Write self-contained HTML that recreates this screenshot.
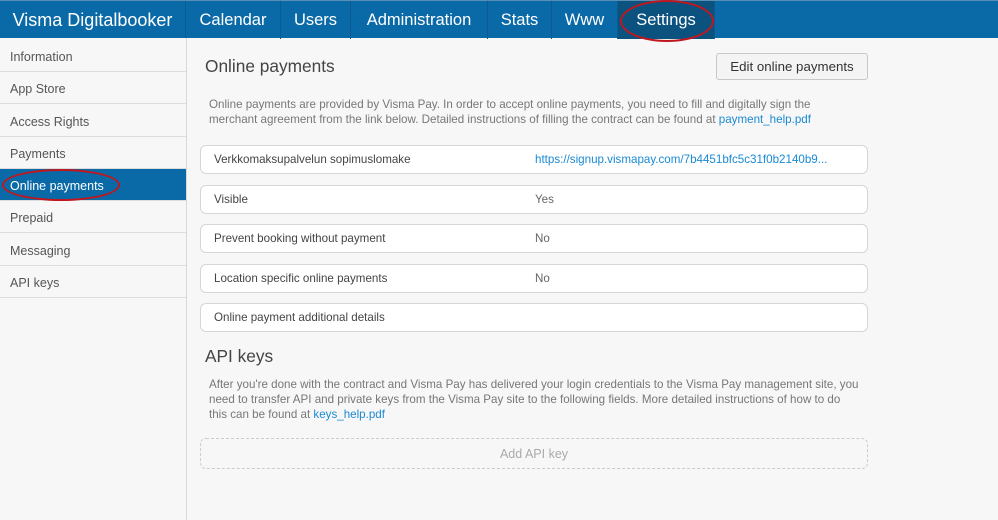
<!DOCTYPE html>
<html><head><meta charset="utf-8"><style>
*{box-sizing:border-box;margin:0;padding:0}
body{width:998px;height:520px;overflow:hidden;background:#f7f7f7;font-family:"Liberation Sans",sans-serif;position:relative}
.top{position:absolute;left:0;top:0;width:998px;height:38px;background:#0a6aa8;border-top:1px solid #5a8fb5}
.top div{position:absolute;top:0;height:38px;line-height:38px;color:#fff;font-size:16.5px;text-align:center;border-right:1px solid #0c5b8f}
.side{position:absolute;left:0;top:38px;width:187px;height:482px;background:#f7f7f7;border-right:1px solid #d8d8d8}
.side div{position:absolute;left:0;width:186px;height:32px;border-bottom:1px solid #dcdcdc;font-size:12.5px;color:#555;padding-left:10px;line-height:34px}
.side .act{background:#0a6aa8;color:#fff}
.h{position:absolute;font-size:17.3px;color:#444}
.p{position:absolute;left:209px;width:680px;font-size:11.6px;color:#777;line-height:15px;white-space:nowrap}
a{color:#1a8ad4;text-decoration:none}
.row{position:absolute;left:200px;width:668px;height:29px;background:#fff;border:1px solid #d6d6d6;border-radius:6px;font-size:11.6px;color:#444;line-height:28px;padding-left:13px}
.row span{position:absolute;left:334px;color:#666}
.btn{position:absolute;left:716px;top:53px;width:152px;height:27px;background:#f4f4f4;border:1px solid #c8c8c8;border-radius:3px;font-size:13.3px;color:#333;text-align:center;line-height:25px}
.add{position:absolute;left:200px;top:438px;width:668px;height:31px;border:1px dashed #ccc;border-radius:6px;font-size:12.5px;color:#aaa;text-align:center;line-height:30px}
.ov{position:absolute;border:2px solid #c0171e;border-radius:50%}
</style></head><body>
<div class="top">
<div style="left:0;width:186px;font-size:18px">Visma Digitalbooker</div>
<div style="left:186px;width:95px">Calendar</div>
<div style="left:281px;width:70px">Users</div>
<div style="left:351px;width:137px">Administration</div>
<div style="left:488px;width:64px">Stats</div>
<div style="left:552px;width:66px">Www</div>
<div style="left:618px;width:97px;background:#0b527f">Settings</div>
</div>
<div class="ov" style="left:620px;top:0;width:94px;height:42px"></div>
<div class="side">
<div style="top:2px">Information</div>
<div style="top:34px">App Store</div>
<div style="top:67px">Access Rights</div>
<div style="top:99px">Payments</div>
<div class="act" style="top:131px">Online payments</div>
<div style="top:163px">Prepaid</div>
<div style="top:196px">Messaging</div>
<div style="top:228px">API keys</div>
</div>
<div class="ov" style="left:2px;top:169px;width:118px;height:32px"></div>
<div class="h" style="left:205px;top:56px">Online payments</div>
<div class="btn">Edit online payments</div>
<div class="p" style="top:97px">Online payments are provided by Visma Pay. In order to accept online payments, you need to fill and digitally sign the<br>merchant agreement from the link below. Detailed instructions of filling the contract can be found at <a>payment_help.pdf</a></div>
<div class="row" style="top:145px">Verkkomaksupalvelun sopimuslomake<span style="color:#1a8ad4">https://signup.vismapay.com/7b4451bfc5c31f0b2140b9...</span></div>
<div class="row" style="top:185px">Visible<span>Yes</span></div>
<div class="row" style="top:224px">Prevent booking without payment<span>No</span></div>
<div class="row" style="top:264px">Location specific online payments<span>No</span></div>
<div class="row" style="top:303px">Online payment additional details</div>
<div class="h" style="left:205px;top:346px">API keys</div>
<div class="p" style="top:377px">After you're done with the contract and Visma Pay has delivered your login credentials to the Visma Pay management site, you<br>need to transfer API and private keys from the Visma Pay site to the following fields. More detailed instructions of how to do<br>this can be found at <a>keys_help.pdf</a></div>
<div class="add">Add API key</div>
</body></html>
